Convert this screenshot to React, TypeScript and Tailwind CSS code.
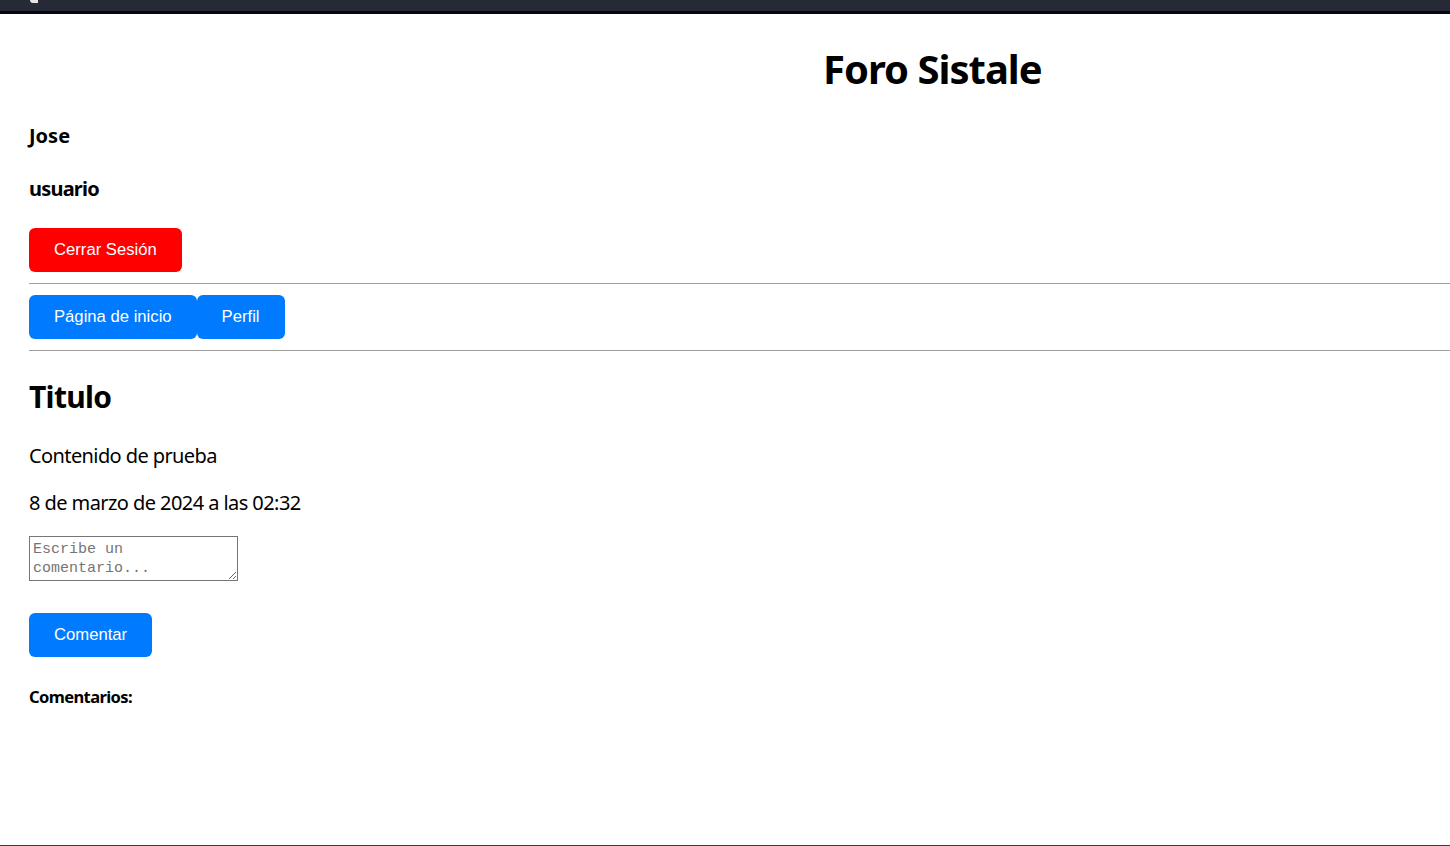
import { useState } from "react";

const sans = "font-['Noto_Sans',sans-serif]";
const btn =
  "font-['Liberation_Sans',Arial,sans-serif] block h-[44px] px-[25px] pb-[1px] rounded-[6px] text-white text-[16.67px] leading-[19px]";

export default function App() {
  const [comment, setComment] = useState("");

  return (
    <div className="h-[846px] w-[1450px] flex flex-col bg-white overflow-hidden border-b border-[#3c3c3c]">
      <div className="h-[11px] bg-[#262a37] relative">
        <span className="absolute left-[30px] top-0 block w-[8px] h-[3px] bg-[#e6e6e6] rounded-bl-[3px]" />
      </div>
      <div className="h-[3px] bg-[#050812]" />

      <main className={`${sans} text-black pl-[29px] flex-1`}>
        <h1 className="ml-[794px] mt-[31px] text-[40px] leading-[48px] font-bold tracking-[-1px]">Foro Sistale</h1>

        <p className="mt-[31px] text-[20px] leading-[24px] font-bold">Jose</p>
        <p className="mt-[29px] text-[20px] leading-[24px] font-bold tracking-[-0.8px]">usuario</p>

        <button className={`${btn} mt-[27px] bg-[#ff0000]`}>Cerrar Sesión</button>

        <hr className="mt-[11px] border-t border-[#a0a0a0]" />

        <nav className="mt-[11px] flex">
          <button className={`${btn} bg-[#007bff]`}>Página de inicio</button>
          <button className={`${btn} bg-[#007bff]`}>Perfil</button>
        </nav>

        <hr className="mt-[11px] border-t border-[#a0a0a0]" />

        <h2 className="mt-[28px] text-[30px] leading-[36px] font-bold tracking-[-0.7px]">Titulo</h2>
        <p className="mt-[29px] text-[20px] leading-[24px] tracking-[-0.6px]">Contenido de prueba</p>
        <p className="mt-[23px] text-[20px] leading-[24px] tracking-[-0.57px]">8 de marzo de 2024 a las 02:32</p>

        <textarea
          value={comment}
          onChange={(e) => setComment(e.target.value)}
          placeholder="Escribe un comentario..."
          className="block mt-[21px] w-[209px] h-[45px] border border-[#767676] px-[3px] pt-[3px] font-['Liberation_Mono',monospace] text-[15px] leading-[19px] text-black placeholder:text-[#757575] resize"
        />

        <button className={`${btn} mt-[32px] bg-[#007bff]`}>Comentar</button>

        <h5 className="mt-[30px] text-[16.5px] leading-[20px] font-bold tracking-[-0.6px]">Comentarios:</h5>
      </main>
    </div>
  );
}
